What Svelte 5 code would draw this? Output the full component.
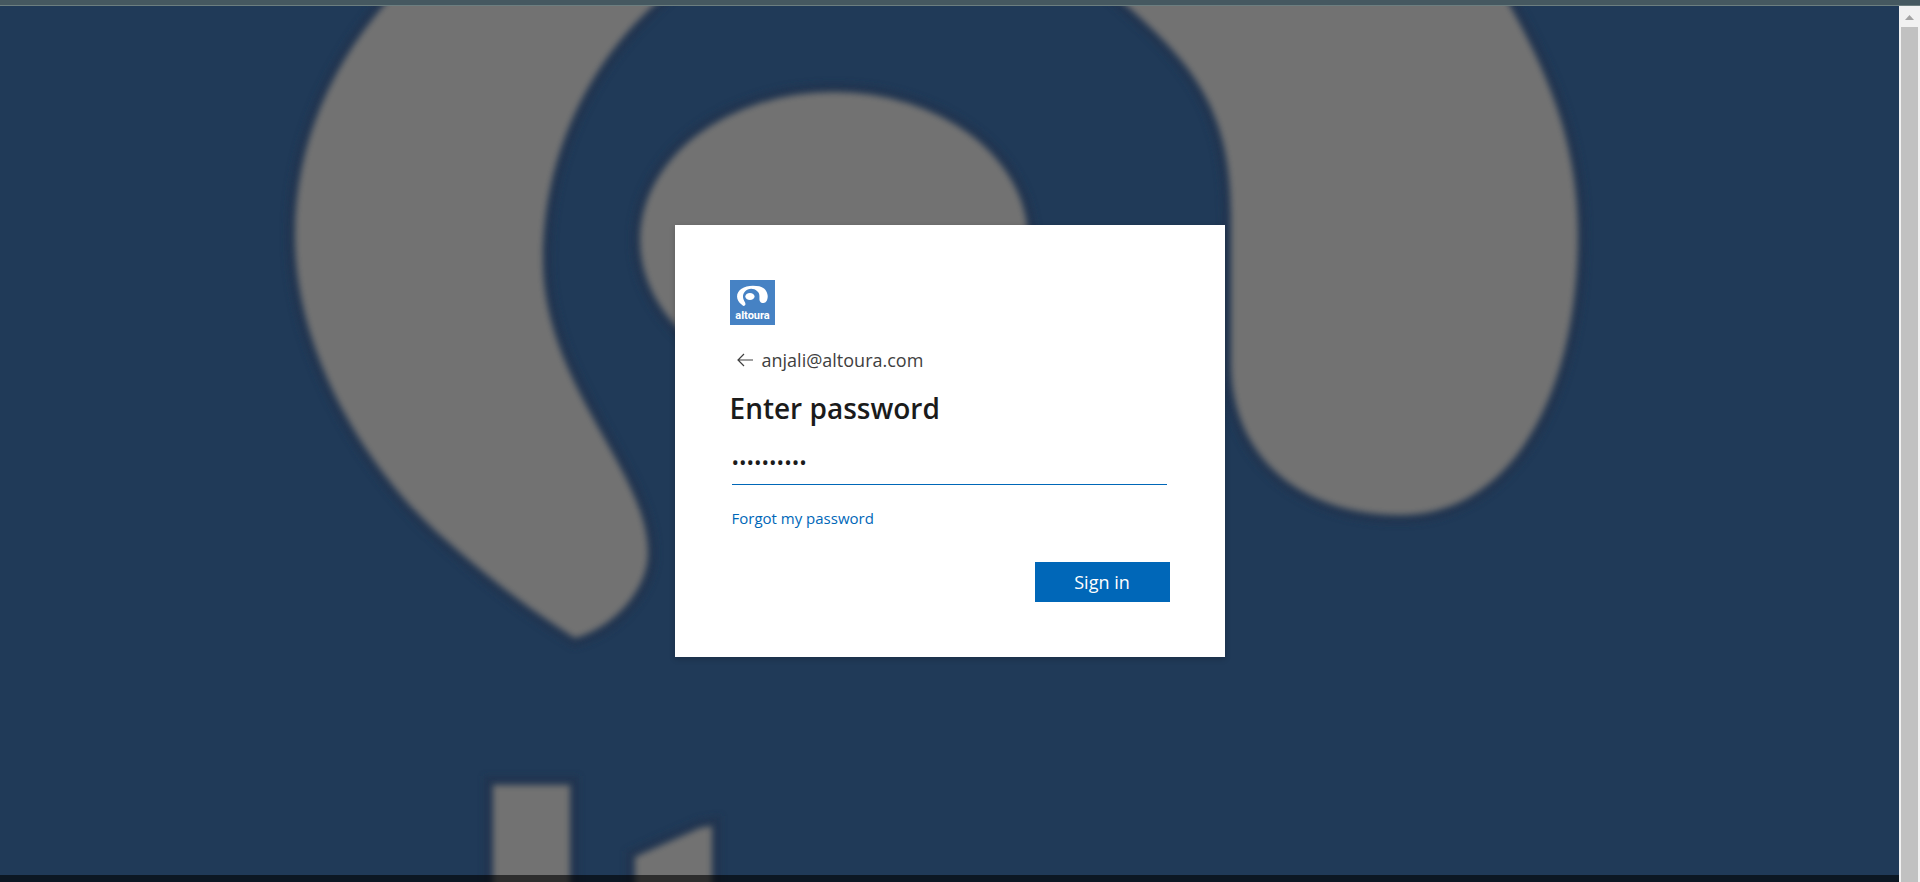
<script lang="ts">
  let email = "anjali@altoura.com";
  let password = "password12";

  // Swirl of the Altoura mark, shared by the backdrop and the small logo
  const swirl =
    "M575 638 C540 616 505 592 447 541 C375 480 295 360 295 236 C295 -20 580 -211 960 -211 C1230 -211 1420 -155 1510 6 C1552 80 1578 150 1578 234 C1578 390 1514 515 1400 515 C1310 515 1231 465 1231 362 V215 C1231 112 1195 66 1127 6 C1065 -50 980 -82 885 -82 C680 -82 543 80 543 260 C543 385 648 470 648 553 C648 590 613 628 575 638 Z";
</script>

<div class="page">
  <svg
    class="backdrop"
    viewBox="0 0 1899 882"
    preserveAspectRatio="xMidYMid slice"
    aria-hidden="true"
  >
    <defs>
      <filter id="soft" x="-5%" y="-5%" width="110%" height="110%">
        <feGaussianBlur stdDeviation="3" />
      </filter>
      <g id="shapes">
        <path d={swirl} />
        <ellipse cx="834" cy="240" rx="194" ry="148" />
        <rect x="493" y="785" width="77" height="140" />
        <polygon points="635,857 700,828 712,826 712,925 635,925" />
      </g>
    </defs>
    <use href="#shapes" class="halo" filter="url(#soft)" />
    <use href="#shapes" class="fill" filter="url(#soft)" />
  </svg>

  <div class="top-edge"></div>

  <main>
    <form class="card" on:submit|preventDefault>
      <svg class="logo" viewBox="0 0 45 45" role="img" aria-label="altoura">
        <rect width="45" height="45" fill="#4682c4" />
        <g fill="#fff" transform="translate(0 10.75) scale(0.0239)">
          <path d={swirl} />
          <ellipse cx="834" cy="240" rx="194" ry="148" />
        </g>
        <text x="22.5" y="39" text-anchor="middle">altoura</text>
      </svg>

      <div class="identity">
        <button type="button" class="back" aria-label="Back">
          <svg viewBox="0 0 16 14" aria-hidden="true">
            <path d="M7 1 L1 7 L7 13 M1 7 H16" />
          </svg>
        </button>
        <span>{email}</span>
      </div>

      <h1>Enter password</h1>

      <input
        type="password"
        bind:value={password}
        aria-label="Password"
        autocomplete="off"
      />

      <a href="#reset">Forgot my password</a>

      <button type="submit" class="submit">Sign in</button>
    </form>
  </main>

  <div class="bottom-edge"></div>

  <div class="scrollbar" aria-hidden="true">
    <svg viewBox="0 0 21 21">
      <path d="M6 14 L10.5 9 L15 14 Z" />
    </svg>
    <div class="thumb"></div>
  </div>
</div>

<style>
  :global(body) {
    background: #203a58;
  }

  .page {
    display: grid;
    grid-template-columns: minmax(0, 1fr) 21px;
    grid-template-rows: 6px 1fr 7px;
    min-height: 100vh;
    color: #1b1b1b;
    font-family: "Segoe UI", "Open Sans", "Noto Sans", sans-serif;
  }

  /* Backdrop */
  .backdrop {
    grid-area: 1 / 1 / -1 / 2;
    width: 100%;
    height: 100%;
    min-height: 0;
    contain: size;
    background: #203a58;
  }

  .halo {
    fill: none;
    stroke: #21324c;
    stroke-width: 18px;
    opacity: 0.6;
  }

  .fill {
    fill: #727272;
  }

  .top-edge {
    grid-area: 1 / 1 / 2 / -1;
    box-sizing: border-box;
    border-bottom: 1px solid #6c7e80;
    background: #455860;
    z-index: 1;
  }

  .bottom-edge {
    grid-area: 3 / 1 / 4 / 2;
    background: rgba(0, 0, 0, 0.6);
    z-index: 1;
  }

  /* Sign-in card */
  main {
    grid-area: 2 / 1 / 3 / 2;
    display: flex;
    align-items: center;
    justify-content: center;
    z-index: 1;
  }

  .card {
    display: flex;
    flex-direction: column;
    box-sizing: border-box;
    width: 100%;
    max-width: 550px;
    padding: 55px;
    background: #fff;
    box-shadow: 0 2px 6px rgba(0, 0, 0, 0.2);
  }

  .logo {
    width: 45px;
    height: 45px;
  }

  .logo text {
    fill: #fff;
    font-family: Roboto, sans-serif;
    font-size: 11px;
    font-weight: 700;
  }

  .identity {
    display: flex;
    align-items: center;
    gap: 2px;
    margin-top: 20px;
    color: #404040;
    font-size: 18px;
    line-height: 30px;
  }

  .back {
    display: flex;
    align-items: center;
    justify-content: center;
    width: 30px;
    height: 30px;
    padding: 0;
    border: none;
    background: none;
    cursor: pointer;
  }

  .back svg {
    width: 16px;
    height: 14px;
    fill: none;
    stroke: #404040;
    stroke-width: 1.2;
  }

  h1 {
    margin: 16px 0 14px;
    font-size: 28px;
    font-weight: 600;
    line-height: 35px;
  }

  input {
    box-sizing: border-box;
    height: 45px;
    margin: 0 3px 0 2px;
    padding: 2px 0 0;
    border: none;
    border-bottom: 1px solid #0067b8;
    outline: none;
    color: #1b1b1b;
    font-family: inherit;
    font-size: 20px;
  }

  a {
    align-self: flex-start;
    margin: 23px 2px 0;
    color: #0067b8;
    font-size: 15px;
    line-height: 20px;
    text-decoration: none;
  }

  a:hover {
    text-decoration: underline;
  }

  .submit {
    align-self: flex-end;
    width: 135px;
    height: 40px;
    margin-top: 34px;
    padding: 0;
    border: none;
    background: #0067b8;
    color: #fff;
    font-family: inherit;
    font-size: 18px;
    cursor: pointer;
  }

  .submit:hover {
    background: #005da6;
  }

  /* Scrollbar */
  .scrollbar {
    grid-area: 2 / 2 / -1 / 3;
    display: flex;
    flex-direction: column;
    background: #f1f1f1;
  }

  .scrollbar svg {
    width: 21px;
    height: 21px;
    fill: #a3a3a3;
  }

  .thumb {
    flex: 1;
    margin: 0 2px;
    background: #c1c1c1;
  }
</style>
